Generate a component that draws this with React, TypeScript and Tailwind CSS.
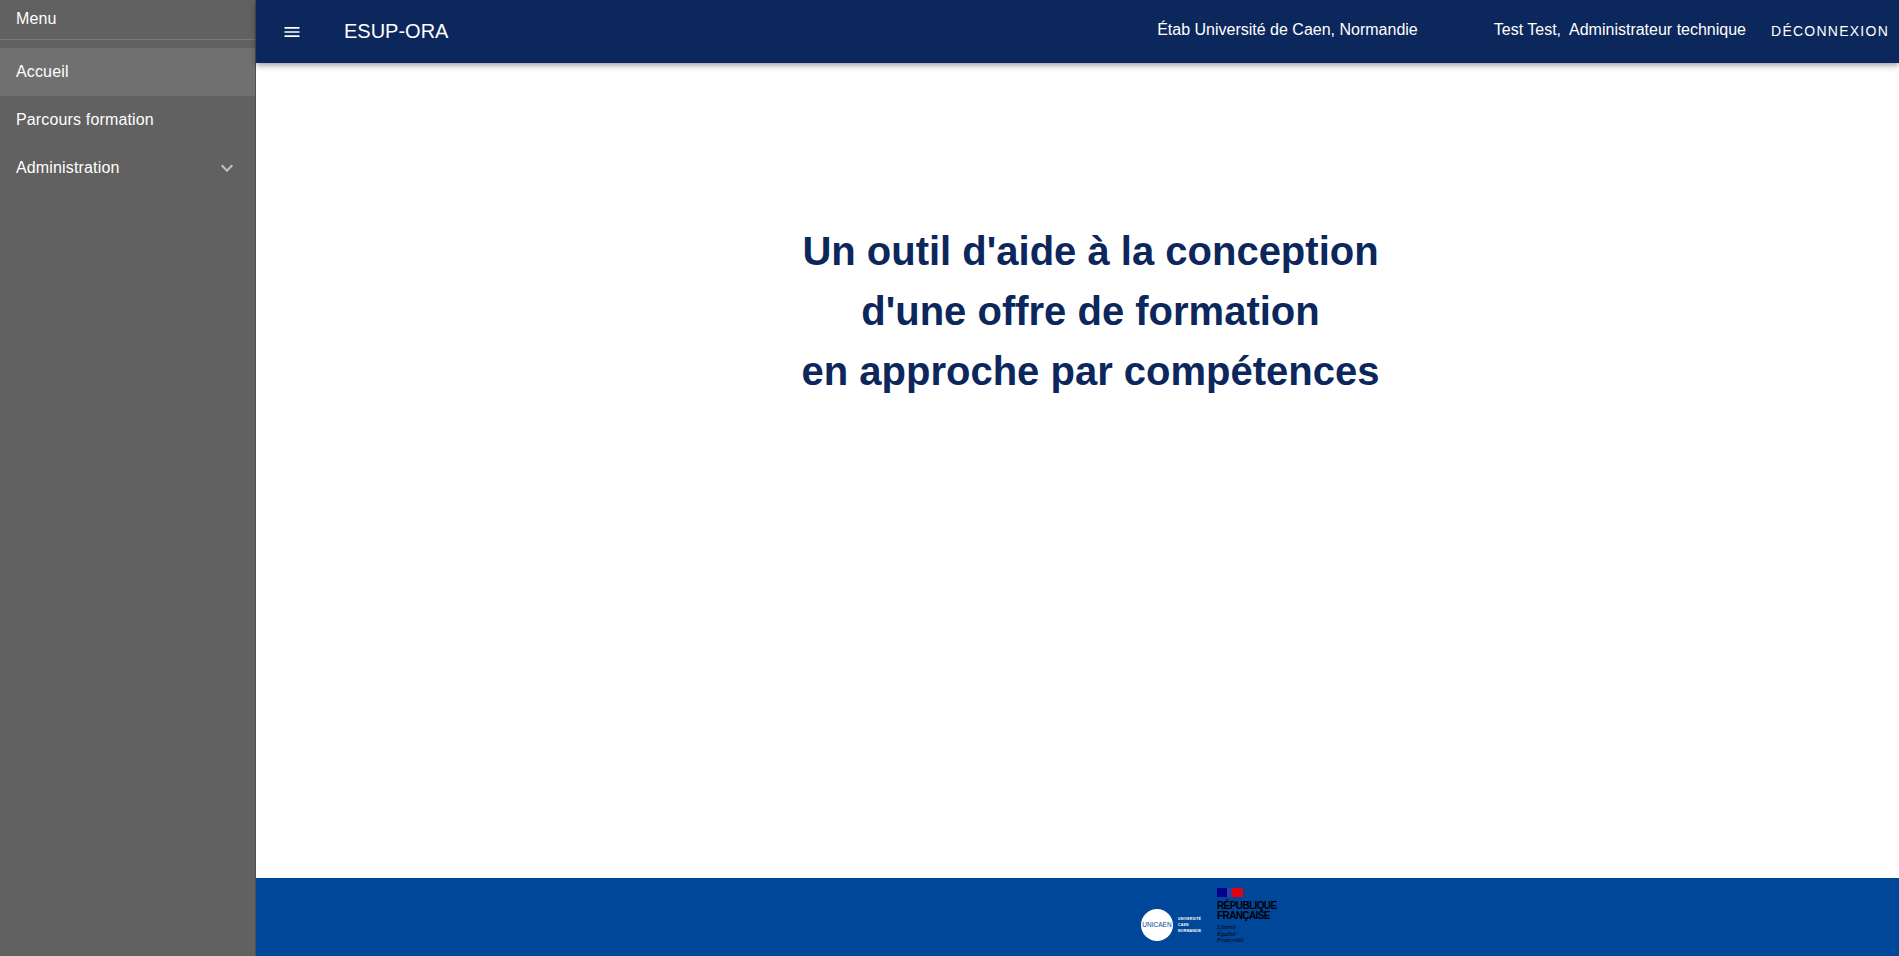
const font = "font-['Liberation_Sans',Arial,sans-serif]";

function SideItem({ label, active, chevron }: { label: string; active?: boolean; chevron?: boolean }) {
  return (
    <div className={`h-12 pl-4 pr-4 flex items-center justify-between text-[16px] tracking-[0.15px] text-white ${active ? "bg-[#707070]" : ""}`}>
      <span>{label}</span>
      {chevron && (
        <svg width="24" height="24" viewBox="0 0 24 24" fill="#c4c4c4" className="shrink-0">
          <path d="M16.59 8.59L12 13.17 7.41 8.59 6 10l6 6 6-6z" />
        </svg>
      )}
    </div>
  );
}

function Logos() {
  return (
    <div className="flex items-start">
      <div className="flex items-center gap-[5px] mt-[31px] w-[76px]">
        <div className="w-[32px] h-[32px] shrink-0 rounded-full bg-white flex items-center justify-center text-[6.5px] text-[#004699]">UNICAEN</div>
        <div className="text-[3.5px] leading-[6px] text-white font-bold tracking-[0.2px]">
          <div>UNIVERSITÉ</div>
          <div>CAEN</div>
          <div>NORMANDIE</div>
        </div>
      </div>
      <div className="flex flex-col mt-[10px]">
        <div className="flex w-[26px] h-[9px] mb-[4px]">
          <div className="w-[10px] bg-[#000091]" />
          <div className="w-[5px] bg-[#3a3a9a]" />
          <div className="w-[11px] bg-[#e1000f]" />
        </div>
        <div className="text-[10px] leading-[10px] tracking-[-0.6px] font-bold text-black">RÉPUBLIQUE</div>
        <div className="text-[10px] leading-[10px] tracking-[-0.6px] font-bold text-black">FRANÇAISE</div>
        <div className="mt-[3px] text-[6.5px] leading-[6.5px] italic text-black font-['Liberation_Serif',serif]">
          <div>Liberté</div>
          <div>Égalité</div>
          <div>Fraternité</div>
        </div>
      </div>
    </div>
  );
}

export default function App() {
  return (
    <div className={`flex h-[956px] overflow-hidden ${font} bg-white`}>
      <aside className="w-[256px] shrink-0 bg-[#616161] border-r border-[#4f4f4f] flex flex-col">
        <div className="h-[40px] shrink-0 border-b border-[#7a7a7a] mb-[8px] pl-4 pt-[8px] text-[16px] leading-[21px] tracking-[0.15px] text-white">Menu</div>
        <SideItem label="Accueil" active />
        <SideItem label="Parcours formation" />
        <SideItem label="Administration" chevron />
      </aside>
      <div className="flex-1 flex flex-col min-w-0">
        <header className="relative z-10 h-[63px] shrink-0 bg-[#0c275c] shadow-[0_2px_4px_-1px_rgba(0,0,0,0.2),0_4px_5px_0_rgba(0,0,0,0.14),0_1px_10px_0_rgba(0,0,0,0.12)] flex items-center text-white pl-[26px] pr-[10px]">
          <svg width="20" height="20" viewBox="0 0 24 24" fill="#fff" className="mr-[42px] shrink-0">
            <path d="M3 18h18v-2H3v2zm0-5h18v-2H3v2zm0-7v2h18V6H3z" />
          </svg>
          <span className="text-[20px] -mt-[1px]">ESUP-ORA</span>
          <span className="ml-auto text-[16px] -mt-[3px]">Étab Université de Caen, Normandie</span>
          <span className="ml-[76px] text-[16px] -mt-[3px] whitespace-pre">Test Test,  Administrateur technique</span>
          <span className="ml-[25px] text-[14px] tracking-[1.25px]">DÉCONNEXION</span>
        </header>
        <main className="flex-1 pl-[26px] pt-[158px]">
          <h1 className="text-center text-[40px] leading-[60px] font-bold text-[#0c275c]">
            Un outil d'aide à la conception
            <br />
            d'une offre de formation
            <br />
            en approche par compétences
          </h1>
        </main>
        <footer className="h-[78px] shrink-0 bg-[#004699] flex pl-[885px]">
          <Logos />
        </footer>
      </div>
    </div>
  );
}
